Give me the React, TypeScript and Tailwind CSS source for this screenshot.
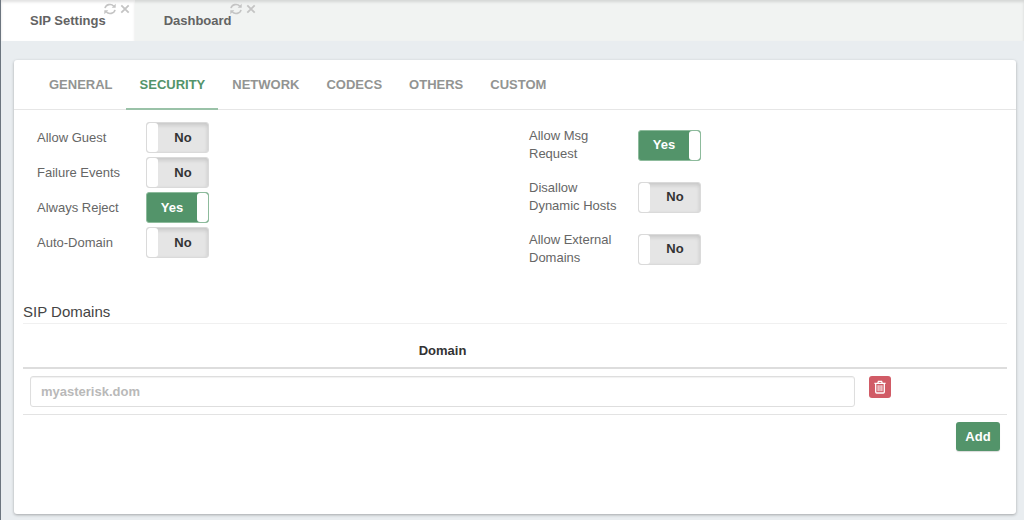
import React, { useState } from 'react';

const RefreshIcon: React.FC = () => (
  <svg viewBox="0 0 12 12" className="h-3 w-3" fill="none" stroke="currentColor" strokeWidth={1.6}>
    <path d="M1 5.2A5 4.6 0 0 1 9.8 3.2M11 6.8A5 4.6 0 0 1 2.2 8.8" />
    <path d="M11.7 0.8V4.8H7.7ZM0.3 11.2V7.2H4.3Z" fill="currentColor" stroke="none" />
  </svg>
);

const CloseIcon: React.FC = () => (
  <svg viewBox="0 0 10 10" className="h-2.5 w-2.5" fill="none" stroke="currentColor" strokeWidth={1.8}>
    <path d="M1.3 1.3L8.7 8.7M8.7 1.3L1.3 8.7" />
  </svg>
);

const TrashIcon: React.FC = () => (
  <svg viewBox="0 0 12 14" className="h-3.5 w-3" fill="none" stroke="currentColor" strokeWidth={1.3}>
    <path d="M0.4 3.3H11.6M3.8 3.1L4.4 1.3H7.6L8.2 3.1" />
    <path d="M1.7 3.4V12Q1.7 13 2.7 13H9.3Q10.3 13 10.3 12V3.4" />
    <path d="M4.1 5.2V11.2M6 5.2V11.2M7.9 5.2V11.2" strokeWidth={1} />
  </svg>
);

interface SettingOption {
  id: string;
  label: string;
  enabled: boolean;
}

const leftOptions: SettingOption[] = [
  { id: 'allow-guest', label: 'Allow Guest', enabled: false },
  { id: 'failure-events', label: 'Failure Events', enabled: false },
  { id: 'always-reject', label: 'Always Reject', enabled: true },
  { id: 'auto-domain', label: 'Auto-Domain', enabled: false },
];

const rightOptions: SettingOption[] = [
  { id: 'allow-msg-request', label: 'Allow Msg Request', enabled: true },
  { id: 'disallow-dynamic-hosts', label: 'Disallow Dynamic Hosts', enabled: false },
  { id: 'allow-external-domains', label: 'Allow External Domains', enabled: false },
];

const windows = ['SIP Settings', 'Dashboard'];
const sections = ['General', 'Security', 'Network', 'Codecs', 'Others', 'Custom'];

const ToggleRow: React.FC<{ option: SettingOption }> = ({ option }) => {
  const [on, setOn] = useState(option.enabled);

  return (
    <div className="flex items-center">
      <label htmlFor={option.id} className="w-[109px] shrink-0 pr-4 leading-[18px]">
        {option.label}
      </label>
      <label
        className={`relative flex h-[31px] w-[63px] cursor-pointer overflow-hidden rounded-[3px] border font-bold ${
          on
            ? 'border-[#8dbb9c] bg-[#53946a] text-white'
            : 'border-[#dadada] bg-[#e5e5e5] text-[#333] shadow-[inset_0_2px_4px_rgba(0,0,0,0.14)]'
        }`}
      >
        <input
          id={option.id}
          type="checkbox"
          checked={on}
          onChange={(e) => setOn(e.target.checked)}
          className="sr-only"
        />
        {!on && <span className="w-[11px] rounded-[3px] bg-white" />}
        <span className="flex flex-1 items-center justify-center">{on ? 'Yes' : 'No'}</span>
        {on && <span className="w-[11px] rounded-[3px] bg-white" />}
      </label>
    </div>
  );
};

export default function App() {
  const [activeWindow, setActiveWindow] = useState('SIP Settings');
  const [activeSection, setActiveSection] = useState('Security');
  const [domain, setDomain] = useState('');

  return (
    <div className="min-h-screen border-l border-[#6c757f] bg-[#e9edf0] font-['Liberation_Sans',Arial,sans-serif] text-[13px] text-[#666]">
      <header className="flex h-[41px] bg-[#f1f3f2] shadow-[inset_0_2px_3px_rgba(0,0,0,0.12)]">
        {windows.map((name) => (
          <div
            key={name}
            className={`relative ${name === activeWindow ? 'bg-white shadow-[inset_0_2px_3px_rgba(0,0,0,0.12)]' : ''}`}
          >
            <button onClick={() => setActiveWindow(name)} className="h-full px-[29px] font-bold text-[#636363]">
              {name}
            </button>
            <div className="absolute top-[3px] right-[5px] flex items-center gap-1 text-[#c4c4c4]">
              <button aria-label={`Reload ${name}`}>
                <RefreshIcon />
              </button>
              <button aria-label={`Close ${name}`}>
                <CloseIcon />
              </button>
            </div>
          </div>
        ))}
      </header>

      <main className="pt-[19px] pr-2 pb-1 pl-[13px]">
        <div className="rounded-[3px] bg-white pb-14 shadow-[0_1px_3px_rgba(0,0,0,0.3)]">
          <nav className="flex h-[50px] border-b border-[#e6e6e6] pl-[21px]">
            {sections.map((name) => (
              <button
                key={name}
                onClick={() => setActiveSection(name)}
                className={`-mb-px border-b-2 pt-0.5 pr-[13px] pl-3.5 font-bold uppercase ${
                  name === activeSection ? 'border-[#9ac2a8] text-[#53946a]' : 'border-transparent text-[#929492]'
                }`}
              >
                {name}
              </button>
            ))}
          </nav>

          <div className="px-[9px]">
            <div className="grid grid-cols-2 pt-3">
              <div className="flex flex-col gap-1 pl-3.5">
                {leftOptions.map((option) => (
                  <ToggleRow key={option.id} option={option} />
                ))}
              </div>
              <div className="flex flex-col gap-4 pt-[5px] pl-3.5">
                {rightOptions.map((option) => (
                  <ToggleRow key={option.id} option={option} />
                ))}
              </div>
            </div>

            <h2 className="mt-[35px] border-b border-[#f0f0f0] pb-px text-[15px] leading-5 text-[#444]">
              SIP Domains
            </h2>

            <table className="mt-[9px] w-full table-fixed">
              <colgroup>
                <col />
                <col className="w-[145px]" />
              </colgroup>
              <thead>
                <tr className="border-b-2 border-[#dddddd]">
                  <th scope="col" className="h-[35px] pt-0.5 text-center font-bold text-[#333]">
                    Domain
                  </th>
                  <td />
                </tr>
              </thead>
              <tbody>
                <tr className="border-b border-[#e3e3e3]">
                  <td className="p-[7px]">
                    <input
                      type="text"
                      aria-label="Domain"
                      placeholder="myasterisk.dom"
                      value={domain}
                      onChange={(e) => setDomain(e.target.value)}
                      className="block h-[31px] w-full rounded-[3px] border border-[#dedede] px-2.5 font-bold text-[#555] shadow-[inset_0_1px_1px_rgba(0,0,0,0.06)] outline-none placeholder:text-[#b9b9b9]"
                    />
                  </td>
                  <td className="p-[7px] align-top">
                    <button
                      aria-label="Delete domain"
                      onClick={() => setDomain('')}
                      className="flex h-[22px] w-[22px] items-center justify-center rounded-[3px] bg-[#d15b66] text-white"
                    >
                      <TrashIcon />
                    </button>
                  </td>
                </tr>
              </tbody>
            </table>

            <div className="flex justify-end p-[7px]">
              <button className="h-[29px] w-11 rounded-[3px] bg-[#53946a] font-bold text-white shadow-[0_1px_1px_rgba(0,0,0,0.15)]">
                Add
              </button>
            </div>
          </div>
        </div>
      </main>
    </div>
  );
}
